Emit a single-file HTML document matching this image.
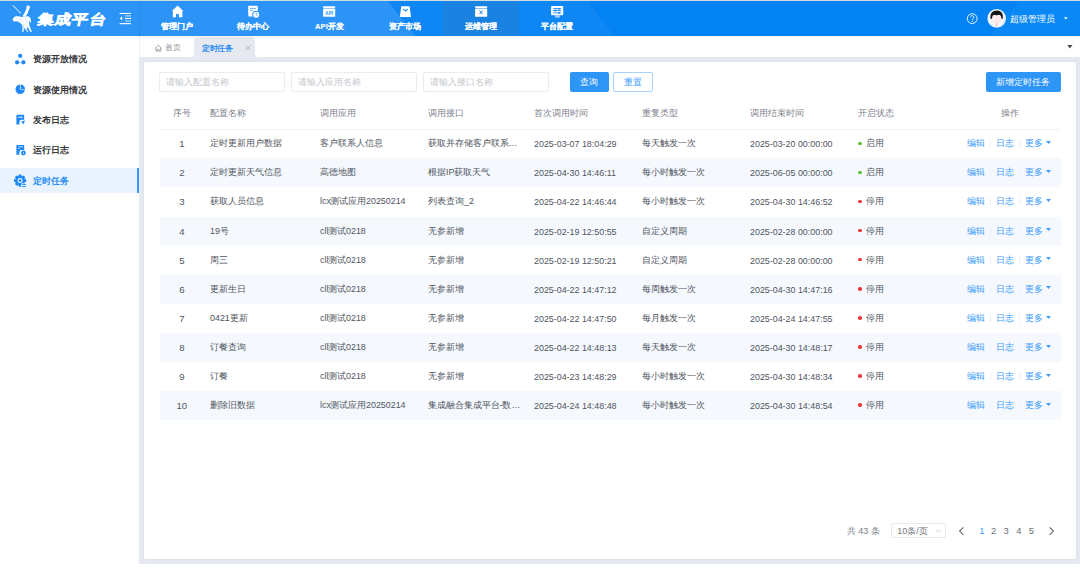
<!DOCTYPE html>
<html><head><meta charset="utf-8">
<style>
*{box-sizing:border-box;margin:0;padding:0}
html,body{width:1080px;height:569px;overflow:hidden;background:#fff;font-family:"Liberation Sans",sans-serif;color:#606266;position:relative}
.abs{position:absolute}
#topline{position:absolute;left:0;top:0;width:1080px;height:1px;background:#d3dce3}
#header{position:absolute;left:0;top:1px;width:1080px;height:35px;background:#2b94f6;overflow:hidden;z-index:5}
#hshadow{position:absolute;left:139px;top:36px;width:941px;height:3px;background:linear-gradient(rgba(120,100,100,0.07),rgba(120,100,100,0));z-index:4}
.navi{position:absolute;top:0;width:76px;height:35px;color:#fff;text-align:center;font-weight:bold;font-size:7.65px;-webkit-text-stroke:0.1px #fff}
.navi .lbl{position:absolute;left:0.4px;width:76px;top:21.3px;line-height:10px}
#side{position:absolute;left:0;top:36px;width:139px;height:533px;background:#fff}
.sitem{position:absolute;left:0;width:139px;height:25px;font-size:9.15px;font-weight:bold;color:#35373b}
.sitem .t{position:absolute;left:32.9px;top:-0.4px;line-height:25px}
#tabs{position:absolute;left:139px;top:36px;width:941px;height:20.5px;background:#fff}
#main{position:absolute;left:139px;top:56.5px;width:941px;height:507.5px;background:#e6e9f0}
#card{position:absolute;left:144.3px;top:61.8px;width:931.5px;height:496.8px;background:#fff;border-radius:2px;box-shadow:0 0 3px rgba(30,50,90,0.08)}
.inp{position:absolute;top:71.7px;height:20.2px;width:126px;border:1px solid #eaecf1;border-radius:2px;font-size:8.8px;color:#c3c6cd;line-height:18px;padding-left:6px}
.btn{position:absolute;top:72px;height:20px;border-radius:2px;font-size:9px;text-align:center;line-height:20px}
.th,.td{position:absolute;height:29.22px;line-height:29.3px;font-size:9px;white-space:nowrap;color:#50555e}
.th{color:#7d828c}
.dot{display:inline-block;width:3.6px;height:3.6px;border-radius:50%;margin-right:4.8px;vertical-align:1.2px}
.op{color:#3d9cf8}
.sep{display:inline-block;width:1px;height:7.5px;background:#edf0f4;margin:0 5px;vertical-align:-1px}
.caret{display:inline-block;width:5px;height:3px;margin-left:2.6px;vertical-align:2.3px}
.pg{position:absolute;font-size:9px;color:#606266;line-height:12px}
.dt{font-size:9.9px;transform-origin:0 50%;transform:scaleX(0.9)}
.idx{font-size:9.6px}
.n{display:inline-block;line-height:10px;font-size:9.9px;transform-origin:0 50%;transform:scaleX(0.9)}

</style></head><body>
<div id="topline"></div>
<div id="header">
  <svg class="abs" style="left:0;top:0" width="1080" height="35">
    <polygon points="388,0 1080,0 1080,35 415,35" fill="#0e87f5"/>
    <polygon points="588,0 1080,0 1080,35 614,35" fill="#0382f4"/>
    <polygon points="1019,0 1080,0 1080,35 991,35" fill="#0a88f6"/>
    <rect x="443" y="0" width="76" height="35" fill="#1a82e0"/>
    <rect x="139" y="0" width="1" height="35" fill="#1f86e6" opacity="0.6"/>
    <!-- horseman logo -->
    <g fill="#fff">
      <path d="M12.4,4.4 L13.2,3.9 L21.2,12.2 L20.6,12.8 Z" opacity="0.85"/>
      <path d="M26.6,5.6 C27,4.4 29.4,4.2 29.9,5.4 C30.2,6.4 29.6,7.4 29,8.4 L27.6,12.6 L25.6,15.6 L22.4,15.6 L24.4,12 L26.2,8.6 Z"/>
      <polygon points="12.6,18.8 13.4,16.8 15.6,15.2 18.5,15.3 22,15.9 26,15.2 29,15.6 30.6,17.2 31.2,21.8 30.3,21.6 29.8,19.8 29,21 29.4,24.6 30.8,28 31.9,30.6 30.8,31.2 28.8,28 27.3,25.8 26.6,28.4 28.4,30.4 27.6,30.9 25.3,28.6 24.8,26.4 23.8,28.4 23.2,31.2 22.2,31 22.5,27.2 22.2,24 20,21.8 17.5,20.4 15.5,19.9 14.2,20.9"/>
    </g>
    <g stroke="#2b94f6" stroke-width="0.4" fill="none" opacity="0.7">
      <path d="M16.5,17.2 l3.2,3.4 M20.6,17.4 l2.2,4.2 M25.8,17.8 l1.2,4.2 M23,23.5 l1.2,5"/>
    </g>
    <!-- indent icon -->
    <g fill="#fff">
      <rect x="119.6" y="11.9" width="11.4" height="1.1"/>
      <rect x="125" y="14.4" width="6" height="1" opacity="0.75"/>
      <rect x="125" y="16.9" width="6" height="1.1"/>
      <rect x="125" y="19.5" width="6" height="1" opacity="0.75"/>
      <rect x="119.6" y="22.1" width="11.4" height="1.1"/>
      <polygon points="119.8,17.4 122.1,15.3 122.1,19.6"/>
    </g>
    <!-- nav icons -->
    <g fill="#fff">
      <polygon points="177.6,4.4 183.2,9.9 182.4,9.9 182.4,16.3 178.9,16.3 178.9,12.9 176,12.9 176,16.3 172.8,16.3 172.8,9.9 171.9,9.9"/>
      <rect x="248.2" y="4.7" width="9.6" height="10.8" rx="1"/>
      <rect x="250" y="6.9" width="6" height="1" fill="#2b94f6" opacity="0.75"/>
      <rect x="250" y="8.9" width="2.6" height="1" fill="#2b94f6" opacity="0.75"/>
      <circle cx="256.2" cy="13.7" r="4" fill="#2b94f6"/>
      <circle cx="256.2" cy="13.7" r="3"/>
      <path d="M256.2,11.9 v1.8 l1.3,1.1" stroke="#2b94f6" stroke-width="0.9" fill="none"/>
      <rect x="323.1" y="5.3" width="12.1" height="1.6" rx="0.5"/>
      <rect x="323.1" y="7.5" width="12.1" height="8.3" rx="0.5"/>
      <text x="329.2" y="13.6" font-size="4.6" font-weight="bold" fill="#2b94f6" text-anchor="middle" font-family="Liberation Sans">API</text>
      <polygon points="401.2,5.3 409.6,5.3 411,15.9 399.9,15.9"/>
      <path d="M403.3,7.9 l2.2,2.1 l2.2,-2.1" stroke="#0e87f5" stroke-width="1.1" fill="none"/>
      <rect x="475.1" y="5.3" width="12.1" height="1.6" rx="0.5"/>
      <rect x="475.1" y="7.5" width="12.1" height="8.3" rx="0.5"/>
      <path d="M479.6,9.6 l3,3.6 M482.6,9.6 l-3,3.6" stroke="#1a82e0" stroke-width="1" fill="none"/>
      <rect x="551.1" y="5" width="12.1" height="9.3" rx="0.8"/>
      <rect x="555" y="14.3" width="4.8" height="2.3" opacity="0.6"/>
      <rect x="553.1" y="7.2" width="8" height="0.9" fill="#0e87f5"/>
      <rect x="553.1" y="9.1" width="8" height="0.9" fill="#0e87f5"/>
      <rect x="553.1" y="11.0" width="8" height="1.4" fill="#0e87f5" opacity="0.6"/>
      <circle cx="559.2" cy="7.65" r="0.95" fill="#0e87f5"/>
      <circle cx="555.4" cy="9.55" r="0.95" fill="#0e87f5"/>
      <circle cx="559.2" cy="11.7" r="0.95" fill="#0e87f5"/>
    </g>
    <!-- help icon -->
    <circle cx="972.2" cy="17.6" r="4.9" stroke="#fff" stroke-width="0.9" fill="none"/>
    <path d="M970.6,16.2 a1.6,1.6 0 1 1 2.4,1.4 c-0.6,0.4 -0.8,0.7 -0.8,1.4" stroke="#fff" stroke-width="0.9" fill="none"/>
    <circle cx="972.2" cy="20.4" r="0.55" fill="#fff"/>
    <!-- avatar -->
    <circle cx="996.7" cy="17.4" r="9.3" fill="#eef3fa"/>
    <path d="M996.7,22.6 C993.6,22.6 992.2,19.8 992.2,16.6 C992.2,13.4 994,11.8 996.7,11.8 C999.4,11.8 1001.2,13.4 1001.2,16.6 C1001.2,19.8 999.8,22.6 996.7,22.6 Z" fill="#fdeceb"/>
    <path d="M990.6,17.8 C989.8,12.2 992.6,9.4 996.8,9.4 C1001,9.4 1003.6,12.2 1002.8,17.8 L1001.4,17.8 C1001.4,15.4 1000.6,14.2 999.4,13.8 C998,14.3 995.4,14.3 994,13.8 C992.8,14.2 992,15.4 992,17.8 Z" fill="#151515"/>
    <path d="M995.9,22.3 h1.6 v3.4 h-1.6 Z" fill="#f3c6c0"/>
    <circle cx="996.7" cy="20.9" r="0.6" fill="#f2b3ad"/>
    <polygon points="1063.9,16.2 1067.8,16.2 1065.85,18.4" fill="#fff"/>
  </svg>
  <div class="abs" style="left:38.6px;top:10.6px;font-size:13.6px;font-weight:900;color:#fff;transform-origin:0 0;transform:scaleX(1.2) skewX(-9deg);letter-spacing:0.4px;line-height:16px;-webkit-text-stroke:0.5px #fff">集成平台</div>
  <div class="navi" style="left:139px"><div class="lbl">管理门户</div></div>
  <div class="navi" style="left:215px"><div class="lbl">待办中心</div></div>
  <div class="navi" style="left:291px"><div class="lbl">API开发</div></div>
  <div class="navi" style="left:367px"><div class="lbl">资产市场</div></div>
  <div class="navi" style="left:443px"><div class="lbl">运维管理</div></div>
  <div class="navi" style="left:519px"><div class="lbl">平台配置</div></div>
  <div class="abs" style="left:1010px;top:11.5px;font-size:9px;color:#fff;line-height:12px">超级管理员</div>
</div>

<div id="side">
  <div class="sitem" style="top:11.6px"><span class="t">资源开放情况</span></div>
  <div class="sitem" style="top:42px"><span class="t">资源使用情况</span></div>
  <div class="sitem" style="top:72.3px"><span class="t">发布日志</span></div>
  <div class="sitem" style="top:102.8px"><span class="t">运行日志</span></div>
  <div class="sitem" style="top:132.1px;height:25.4px;background:#e8f3fe;color:#2a8df4"><span class="t" style="top:1.2px">定时任务</span><div class="abs" style="left:137.2px;top:0;width:2px;height:25.4px;background:#3a97f7"></div></div>
  <svg class="abs" style="left:0;top:0" width="139" height="160">
    <g fill="#1e88f5">
      <circle cx="20.2" cy="19.8" r="2.1"/>
      <circle cx="17.1" cy="26.3" r="2.1"/>
      <circle cx="23.4" cy="26.3" r="2.1"/>
      <path d="M18.9,21.4 L17.9,24.2 M21.5,21.4 L22.6,24.2 M19.2,26.6 L21.3,26.6" stroke="#1e88f5" stroke-width="0.6" opacity="0.45"/>
      <path d="M19.95,48.56 A4.75,4.75 0 1 0 24.99,53.6 L19.95,53.6 Z"/>
      <path d="M20.65,48.56 A4.75,4.75 0 0 1 24.99,52.9 L20.65,52.9 Z"/>
      <path d="M17,78.8 h6.6 a0.6,0.6 0 0 1 0.6,0.6 v4.4 h-2.6 a2.2,2.2 0 0 0 -2.2,2.2 v2.6 h-2.4 a0.6,0.6 0 0 1 -0.6,-0.6 v-8.6 a0.6,0.6 0 0 1 0.6,-0.6 Z"/>
      <rect x="18.3" y="80.6" width="4.4" height="1.2" fill="#cfe4fc"/>
      <polygon points="21.2,85.4 25,84.6 23.4,88.6"/>
      <path d="M17,109 h6.6 a0.6,0.6 0 0 1 0.6,0.6 v4.4 h-2.6 a2.2,2.2 0 0 0 -2.2,2.2 v2.6 h-2.4 a0.6,0.6 0 0 1 -0.6,-0.6 v-8.6 a0.6,0.6 0 0 1 0.6,-0.6 Z"/>
      <rect x="18.3" y="110.4" width="4.8" height="0.9" fill="#cfe4fc"/>
      <rect x="18.3" y="112" width="1.2" height="0.9" fill="#cfe4fc"/>
      <circle cx="23.4" cy="117" r="2.4"/>
      <rect x="23" y="116" width="0.8" height="1.8" fill="#cfe4fc"/>
      <path d="M18.34,140.24 L18.92,138.51 L21.28,138.51 L21.86,140.24 L21.94,140.27 L23.57,139.46 L25.24,141.13 L24.43,142.76 L24.46,142.84 L26.19,143.42 L26.19,145.78 L24.46,146.36 L24.43,146.44 L25.24,148.07 L23.57,149.74 L21.94,148.93 L21.86,148.96 L21.28,150.69 L18.92,150.69 L18.34,148.96 L18.26,148.93 L16.63,149.74 L14.96,148.07 L15.77,146.44 L15.74,146.36 L14.01,145.78 L14.01,143.42 L15.74,142.84 L15.77,142.76 L14.96,141.13 L16.63,139.46 L18.26,140.27 Z"/>
      <circle cx="20.1" cy="144.6" r="2.5" fill="#e8f3fe"/>
      <circle cx="20.1" cy="144.6" r="1.35"/>
      <rect x="21.3" y="147.3" width="5.6" height="4" fill="#e8f3fe"/>
      <rect x="22.1" y="148.1" width="3.8" height="0.9"/>
      <rect x="22.1" y="150" width="3.8" height="0.9"/>
    </g>
  </svg>
</div>

<div id="tabs">
  <div class="abs" style="left:55px;top:1.4px;width:61px;height:19.6px;background:#e6e9f0;border-radius:3.5px 3.5px 0 0"></div>
  <svg class="abs" style="left:0;top:0" width="941" height="21">
    <path d="M51.5,21 A3.5,3.5 0 0 0 55,17.5 L55,21 Z" fill="#e6e9f0"/>
    <path d="M119.5,21 A3.5,3.5 0 0 1 116,17.5 L116,21 Z" fill="#e6e9f0"/>
    <path d="M16.1,12.4 L19.35,9.2 L22.6,12.4 M17,11.6 V15.3 H18.6 V13.4 H20.1 V15.3 H21.7 V11.6" stroke="#909399" stroke-width="0.8" fill="none" stroke-linejoin="round"/>
    <path d="M107,9.6 l4.4,4.4 M111.4,9.6 l-4.4,4.4" stroke="#8e9196" stroke-width="0.6"/>
    <polygon points="928.3,9.1 933.5,9.1 930.9,12.4" fill="#4a4a4a"/>
  </svg>
  <div class="abs" style="left:25.8px;top:2.2px;font-size:7.5px;color:#909399;line-height:20px">首页</div>
  <div class="abs" style="left:63px;top:2.3px;font-size:7.5px;color:#2a8df4;line-height:21px;font-weight:bold;letter-spacing:-0.35px">定时任务</div>
</div>
<div id="main"></div><div id="hshadow"></div><div class="abs" style="left:139px;top:36px;width:1px;height:21px;background:#f0f1f4"></div>
<div id="card"></div>

<div class="inp" style="left:159.2px">请输入配置名称</div>
<div class="inp" style="left:291.3px">请输入应用名称</div>
<div class="inp" style="left:423.2px">请输入接口名称</div>
<div class="btn" style="left:570px;width:38.5px;background:#2d95f6;color:#fff">查询</div>
<div class="btn" style="left:613px;width:39.5px;border:1px solid #a9d3fb;color:#409eff;line-height:18px">重置</div>
<div class="btn" style="left:986px;width:74.5px;background:#2d95f6;color:#fff">新增定时任务</div>

<div class="pg" style="left:846.7px;top:525px;color:#7a7d83">共 43 条</div>
<div class="abs" style="left:890.7px;top:523.4px;width:55.5px;height:15px;border:1px solid #e8eaef;border-radius:2px"></div>
<div class="pg" style="left:897.3px;top:525px;color:#74777d">10条/页</div>
<svg class="abs" style="left:0;top:0;pointer-events:none" width="1080" height="569">
  <path d="M935.8,529.6 l2.6,2.6 l2.6,-2.6" stroke="#c0c4cc" stroke-width="0.7" fill="none"/>
  <path d="M963.4,527.3 l-3.8,3.8 l3.8,3.8" stroke="#606266" stroke-width="1.05" fill="none"/>
  <path d="M1049.6,527.3 l3.8,3.8 l-3.8,3.8" stroke="#606266" stroke-width="1.05" fill="none"/>
</svg>
<div class="pg" style="left:979.2px;top:524.8px;color:#3d9cf8;font-size:9.4px">1</div>
<div class="pg" style="left:991px;top:524.8px;font-size:9.4px;color:#6b6e74">2</div>
<div class="pg" style="left:1003.6px;top:524.8px;font-size:9.4px;color:#6b6e74">3</div>
<div class="pg" style="left:1016.2px;top:524.8px;font-size:9.4px;color:#6b6e74">4</div>
<div class="pg" style="left:1028.8px;top:524.8px;font-size:9.4px;color:#6b6e74">5</div>

<div class="th" style="top:99.4px;left:151.8px;width:60px;text-align:center">序号</div><div class="th" style="top:99.4px;left:210px">配置名称</div><div class="th" style="top:99.4px;left:319.5px">调用应用</div><div class="th" style="top:99.4px;left:427.5px">调用接口</div><div class="th" style="top:99.4px;left:534.4px">首次调用时间</div><div class="th" style="top:99.4px;left:642.3px">重复类型</div><div class="th" style="top:99.4px;left:749.8px">调用结束时间</div><div class="th" style="top:99.4px;left:858px">开启状态</div><div class="th" style="top:99.4px;left:969.8px;width:80px;text-align:center">操作</div><div class="abs" style="left:159.7px;top:128.5px;width:901px;height:1px;background:#f1f2f6"></div><div class="td idx" style="top:129.3px;left:151.8px;width:60px;text-align:center">1</div><div class="td" style="top:129.3px;left:210px">定时更新用户数据</div><div class="td" style="top:129.3px;left:319.5px">客户联系人信息</div><div class="td" style="top:129.3px;left:427.5px">获取并存储客户联系…</div><div class="td dt" style="top:129.3px;left:534.4px">2025-03-07 18:04:29</div><div class="td" style="top:129.3px;left:642.3px">每天触发一次</div><div class="td dt" style="top:129.3px;left:749.8px">2025-03-20 00:00:00</div><div class="td" style="top:129.3px;left:858px"><span class="dot" style="background:#5cc135"></span>启用</div><div class="td op" style="top:129.3px;left:967.0px">编辑<span class="sep"></span>日志<span class="sep"></span>更多<svg class="caret" viewBox="0 0 5 3"><polygon points="0,0 5,0 2.5,3" fill="#3d9cf8"/></svg></div><div class="abs" style="left:159.7px;top:158.39px;width:901px;height:29.09px;background:#f5f9fe"></div><div class="td idx" style="top:158.39px;left:151.8px;width:60px;text-align:center">2</div><div class="td" style="top:158.39px;left:210px">定时更新天气信息</div><div class="td" style="top:158.39px;left:319.5px">高德地图</div><div class="td" style="top:158.39px;left:427.5px">根据<span class="n" style="margin-right:-0.94px">IP</span>获取天气</div><div class="td dt" style="top:158.39px;left:534.4px">2025-04-30 14:46:11</div><div class="td" style="top:158.39px;left:642.3px">每小时触发一次</div><div class="td dt" style="top:158.39px;left:749.8px">2025-06-05 00:00:00</div><div class="td" style="top:158.39px;left:858px"><span class="dot" style="background:#5cc135"></span>启用</div><div class="td op" style="top:158.39px;left:967.0px">编辑<span class="sep"></span>日志<span class="sep"></span>更多<svg class="caret" viewBox="0 0 5 3"><polygon points="0,0 5,0 2.5,3" fill="#3d9cf8"/></svg></div><div class="td idx" style="top:187.48px;left:151.8px;width:60px;text-align:center">3</div><div class="td" style="top:187.48px;left:210px">获取人员信息</div><div class="td" style="top:187.48px;left:319.5px"><span class="n" style="margin-right:-1.21px">lcx</span>测试应用<span class="n" style="margin-right:-4.40px">20250214</span></div><div class="td" style="top:187.48px;left:427.5px">列表查询<span class="n" style="margin-right:-1.10px">_2</span></div><div class="td dt" style="top:187.48px;left:534.4px">2025-04-22 14:46:44</div><div class="td" style="top:187.48px;left:642.3px">每小时触发一次</div><div class="td dt" style="top:187.48px;left:749.8px">2025-04-30 14:46:52</div><div class="td" style="top:187.48px;left:858px"><span class="dot" style="background:#f5333b"></span>停用</div><div class="td op" style="top:187.48px;left:967.0px">编辑<span class="sep"></span>日志<span class="sep"></span>更多<svg class="caret" viewBox="0 0 5 3"><polygon points="0,0 5,0 2.5,3" fill="#3d9cf8"/></svg></div><div class="abs" style="left:159.7px;top:216.57px;width:901px;height:29.09px;background:#f5f9fe"></div><div class="td idx" style="top:216.57px;left:151.8px;width:60px;text-align:center">4</div><div class="td" style="top:216.57px;left:210px"><span class="n" style="margin-right:-1.10px">19</span>号</div><div class="td" style="top:216.57px;left:319.5px"><span class="n" style="margin-right:-0.93px">cll</span>测试<span class="n" style="margin-right:-2.20px">0218</span></div><div class="td" style="top:216.57px;left:427.5px">无参新增</div><div class="td dt" style="top:216.57px;left:534.4px">2025-02-19 12:50:55</div><div class="td" style="top:216.57px;left:642.3px">自定义周期</div><div class="td dt" style="top:216.57px;left:749.8px">2025-02-28 00:00:00</div><div class="td" style="top:216.57px;left:858px"><span class="dot" style="background:#f5333b"></span>停用</div><div class="td op" style="top:216.57px;left:967.0px">编辑<span class="sep"></span>日志<span class="sep"></span>更多<svg class="caret" viewBox="0 0 5 3"><polygon points="0,0 5,0 2.5,3" fill="#3d9cf8"/></svg></div><div class="td idx" style="top:245.66px;left:151.8px;width:60px;text-align:center">5</div><div class="td" style="top:245.66px;left:210px">周三</div><div class="td" style="top:245.66px;left:319.5px"><span class="n" style="margin-right:-0.93px">cll</span>测试<span class="n" style="margin-right:-2.20px">0218</span></div><div class="td" style="top:245.66px;left:427.5px">无参新增</div><div class="td dt" style="top:245.66px;left:534.4px">2025-02-19 12:50:21</div><div class="td" style="top:245.66px;left:642.3px">自定义周期</div><div class="td dt" style="top:245.66px;left:749.8px">2025-02-28 00:00:00</div><div class="td" style="top:245.66px;left:858px"><span class="dot" style="background:#f5333b"></span>停用</div><div class="td op" style="top:245.66px;left:967.0px">编辑<span class="sep"></span>日志<span class="sep"></span>更多<svg class="caret" viewBox="0 0 5 3"><polygon points="0,0 5,0 2.5,3" fill="#3d9cf8"/></svg></div><div class="abs" style="left:159.7px;top:274.75px;width:901px;height:29.09px;background:#f5f9fe"></div><div class="td idx" style="top:274.75px;left:151.8px;width:60px;text-align:center">6</div><div class="td" style="top:274.75px;left:210px">更新生日</div><div class="td" style="top:274.75px;left:319.5px"><span class="n" style="margin-right:-0.93px">cll</span>测试<span class="n" style="margin-right:-2.20px">0218</span></div><div class="td" style="top:274.75px;left:427.5px">无参新增</div><div class="td dt" style="top:274.75px;left:534.4px">2025-04-22 14:47:12</div><div class="td" style="top:274.75px;left:642.3px">每周触发一次</div><div class="td dt" style="top:274.75px;left:749.8px">2025-04-30 14:47:16</div><div class="td" style="top:274.75px;left:858px"><span class="dot" style="background:#f5333b"></span>停用</div><div class="td op" style="top:274.75px;left:967.0px">编辑<span class="sep"></span>日志<span class="sep"></span>更多<svg class="caret" viewBox="0 0 5 3"><polygon points="0,0 5,0 2.5,3" fill="#3d9cf8"/></svg></div><div class="td idx" style="top:303.84px;left:151.8px;width:60px;text-align:center">7</div><div class="td" style="top:303.84px;left:210px"><span class="n" style="margin-right:-2.20px">0421</span>更新</div><div class="td" style="top:303.84px;left:319.5px"><span class="n" style="margin-right:-0.93px">cll</span>测试<span class="n" style="margin-right:-2.20px">0218</span></div><div class="td" style="top:303.84px;left:427.5px">无参新增</div><div class="td dt" style="top:303.84px;left:534.4px">2025-04-22 14:47:50</div><div class="td" style="top:303.84px;left:642.3px">每月触发一次</div><div class="td dt" style="top:303.84px;left:749.8px">2025-04-24 14:47:55</div><div class="td" style="top:303.84px;left:858px"><span class="dot" style="background:#f5333b"></span>停用</div><div class="td op" style="top:303.84px;left:967.0px">编辑<span class="sep"></span>日志<span class="sep"></span>更多<svg class="caret" viewBox="0 0 5 3"><polygon points="0,0 5,0 2.5,3" fill="#3d9cf8"/></svg></div><div class="abs" style="left:159.7px;top:332.93px;width:901px;height:29.09px;background:#f5f9fe"></div><div class="td idx" style="top:332.93px;left:151.8px;width:60px;text-align:center">8</div><div class="td" style="top:332.93px;left:210px">订餐查询</div><div class="td" style="top:332.93px;left:319.5px"><span class="n" style="margin-right:-0.93px">cll</span>测试<span class="n" style="margin-right:-2.20px">0218</span></div><div class="td" style="top:332.93px;left:427.5px">无参新增</div><div class="td dt" style="top:332.93px;left:534.4px">2025-04-22 14:48:13</div><div class="td" style="top:332.93px;left:642.3px">每天触发一次</div><div class="td dt" style="top:332.93px;left:749.8px">2025-04-30 14:48:17</div><div class="td" style="top:332.93px;left:858px"><span class="dot" style="background:#f5333b"></span>停用</div><div class="td op" style="top:332.93px;left:967.0px">编辑<span class="sep"></span>日志<span class="sep"></span>更多<svg class="caret" viewBox="0 0 5 3"><polygon points="0,0 5,0 2.5,3" fill="#3d9cf8"/></svg></div><div class="td idx" style="top:362.02px;left:151.8px;width:60px;text-align:center">9</div><div class="td" style="top:362.02px;left:210px">订餐</div><div class="td" style="top:362.02px;left:319.5px"><span class="n" style="margin-right:-0.93px">cll</span>测试<span class="n" style="margin-right:-2.20px">0218</span></div><div class="td" style="top:362.02px;left:427.5px">无参新增</div><div class="td dt" style="top:362.02px;left:534.4px">2025-04-23 14:48:29</div><div class="td" style="top:362.02px;left:642.3px">每小时触发一次</div><div class="td dt" style="top:362.02px;left:749.8px">2025-04-30 14:48:34</div><div class="td" style="top:362.02px;left:858px"><span class="dot" style="background:#f5333b"></span>停用</div><div class="td op" style="top:362.02px;left:967.0px">编辑<span class="sep"></span>日志<span class="sep"></span>更多<svg class="caret" viewBox="0 0 5 3"><polygon points="0,0 5,0 2.5,3" fill="#3d9cf8"/></svg></div><div class="abs" style="left:159.7px;top:391.11px;width:901px;height:29.09px;background:#f5f9fe"></div><div class="td idx" style="top:391.11px;left:151.8px;width:60px;text-align:center">10</div><div class="td" style="top:391.11px;left:210px">删除旧数据</div><div class="td" style="top:391.11px;left:319.5px"><span class="n" style="margin-right:-1.21px">lcx</span>测试应用<span class="n" style="margin-right:-4.40px">20250214</span></div><div class="td" style="top:391.11px;left:427.5px">集成融合集成平台-数…</div><div class="td dt" style="top:391.11px;left:534.4px">2025-04-24 14:48:48</div><div class="td" style="top:391.11px;left:642.3px">每小时触发一次</div><div class="td dt" style="top:391.11px;left:749.8px">2025-04-30 14:48:54</div><div class="td" style="top:391.11px;left:858px"><span class="dot" style="background:#f5333b"></span>停用</div><div class="td op" style="top:391.11px;left:967.0px">编辑<span class="sep"></span>日志<span class="sep"></span>更多<svg class="caret" viewBox="0 0 5 3"><polygon points="0,0 5,0 2.5,3" fill="#3d9cf8"/></svg></div>
</body></html>
